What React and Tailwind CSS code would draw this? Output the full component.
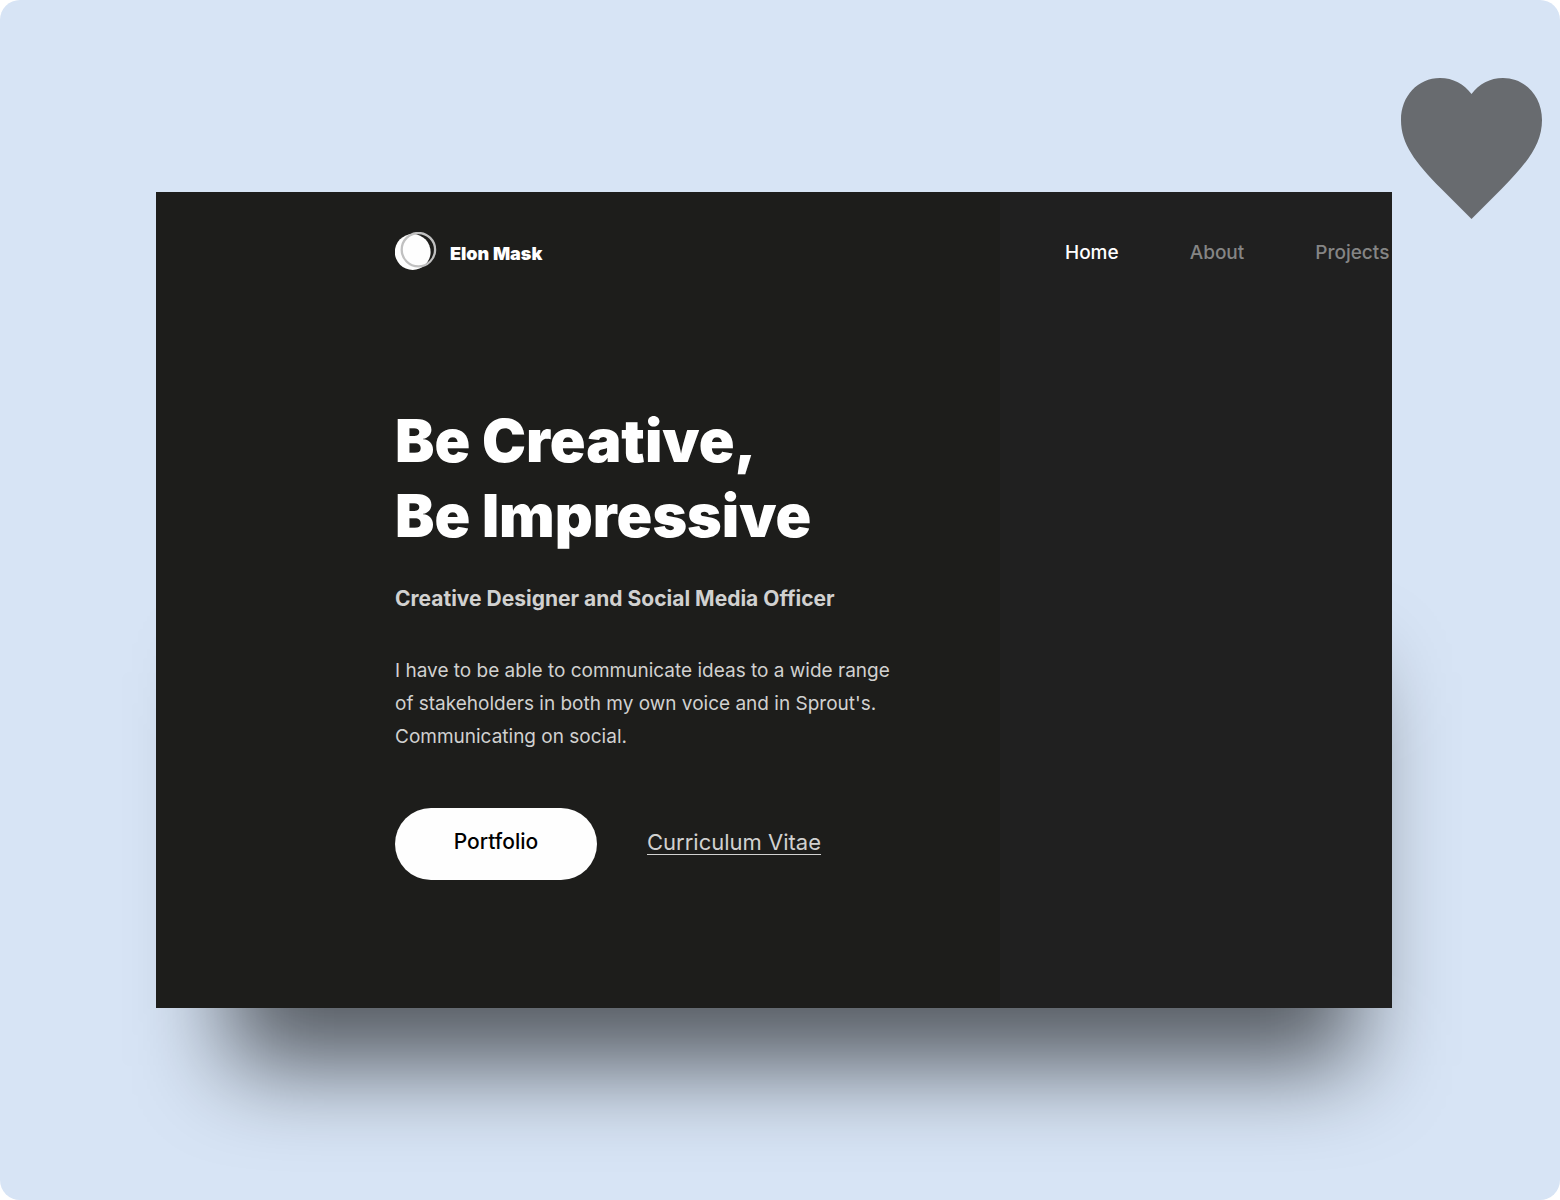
const links = [
  { label: "Home", active: true },
  { label: "About", active: false },
  { label: "Projects", active: false },
];

function Logo() {
  return (
    <svg viewBox="0 0 42 38" className="h-[38px] w-[42px] shrink-0" aria-hidden="true">
      <circle cx="17.700" cy="20" r="17.900" fill="#fefefe" />
      <circle cx="23.400" cy="17.700" r="16.700" fill="none" stroke="#c0c0c0" strokeWidth="2.300" />
    </svg>
  );
}

function Heart() {
  return (
    <svg viewBox="0 0 141 141" className="h-[141px] w-[141px]" aria-hidden="true">
      <path
        d="M70.500 141L40 110.500C14 84 0 66 0 42C0 18 17 0 39 0C52 0 63 6 70.500 16C78 6 89 0 102 0C124 0 141 18 141 42C141 66 127 84 101 110.500Z"
        fill="#686b6f"
      />
    </svg>
  );
}

export default function App() {
  return (
    <div className="bg-white font-['Inter',sans-serif]">
      <main className="relative min-h-screen overflow-hidden rounded-[20px] bg-[#d7e4f5] pt-48 pr-[168px] pb-48 pl-[156px]">
        <button type="button" aria-label="Like" className="absolute top-[78px] right-[18px]">
          <Heart />
        </button>
        <div className="relative">
          <div className="absolute top-[480px] right-[36px] -bottom-[58px] left-[72px] rounded-lg bg-black/60 blur-[46px]" />
          <div className="relative grid grid-cols-[844fr_392fr] overflow-hidden">
            <section className="bg-[#1d1d1b] pt-10 pb-32 pl-[239px]">
              <a href="#home" className="flex items-center gap-[13px] text-white">
                <Logo />
                <span className="pt-[6px] text-[18px] leading-7 font-black">Elon Mask</span>
              </a>
              <h1 className="mt-[133px] text-[59px] leading-[75px] font-black whitespace-nowrap text-white">
                Be Creative,
                <br />
                Be Impressive
              </h1>
              <h2 className="mt-8 text-[21px] leading-7 font-bold whitespace-nowrap text-[#d1d1d0]">
                Creative Designer and Social Media Officer
              </h2>
              <p className="mt-[41px] text-[19px] leading-[33px] whitespace-nowrap text-[#d1d1d0]">
                I have to be able to communicate ideas to a wide range
                <br />
                of stakeholders in both my own voice and in Sprout's.
                <br />
                Communicating on social.
              </p>
              <div className="mt-[55px] flex items-center gap-[50px] leading-7 whitespace-nowrap">
                <button
                  type="button"
                  className="h-[72px] w-[202px] rounded-full bg-[#fefefe] pb-1 text-[21px] font-medium text-black"
                >
                  Portfolio
                </button>
                <a
                  href="#cv"
                  className="pb-1 text-[22px] text-[#d1d1d0] underline decoration-1 underline-offset-4"
                >
                  Curriculum Vitae
                </a>
              </div>
            </section>
            <nav className="flex items-start gap-[71px] bg-[#202020] pt-[47px] pl-[65px] text-[19px] leading-7 font-medium">
              {links.map((l) => (
                <a key={l.label} href="#" className={l.active ? "text-white" : "text-[#858585]"}>
                  {l.label}
                </a>
              ))}
            </nav>
          </div>
        </div>
      </main>
    </div>
  );
}
